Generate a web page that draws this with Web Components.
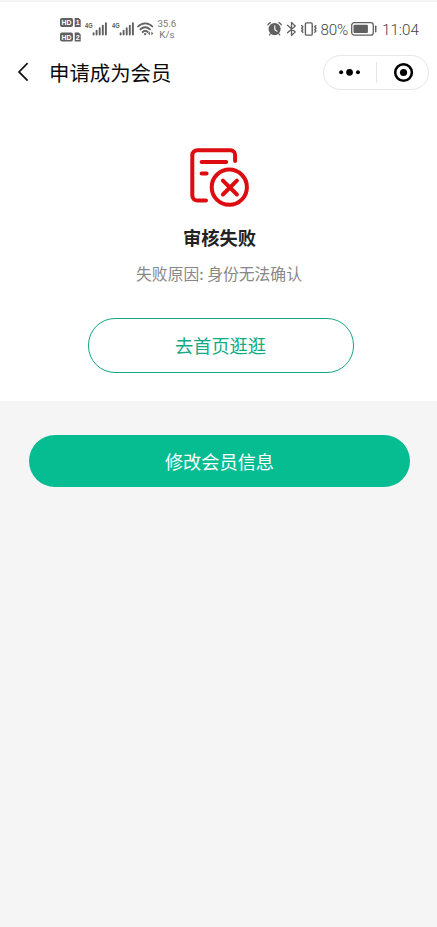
<!DOCTYPE html>
<html lang="zh-CN">
<head>
<meta charset="utf-8">
<meta name="viewport" content="width=device-width, initial-scale=1">
<title>申请成为会员</title>
<style>
html, body { margin: 0; height: 100%; }
body { background: #f5f5f5; font-family: "Noto Sans CJK SC", sans-serif; overflow: hidden; }
</style>
</head>
<body>
<member-page></member-page>
<script>
function define(name, html) {
  const t = document.createElement('template');
  t.innerHTML = html;
  customElements.define(name, class extends HTMLElement {
    constructor() {
      super();
      this.attachShadow({ mode: 'open' }).append(t.content.cloneNode(true));
    }
  });
}

define('sim-badges', `
<style>
:host { display: block; width: 21px; height: 24px; }
svg { display: block; }
text { font: bold 8px "Liberation Sans", sans-serif; fill: #fff; text-anchor: middle; }
</style>
<svg width="21" height="24" viewBox="0 0 21 24">
  <g fill="#606060">
    <rect x="0" y="0" width="13" height="9" rx="2"/><path d="M14.7 0h4l2 2v7h-6z"/>
    <rect x="0" y="14.6" width="13" height="9" rx="2"/><path d="M14.7 14.6h4l2 2v7h-6z"/>
  </g>
  <text x="6.5" y="7.3" textLength="10" lengthAdjust="spacingAndGlyphs">HD</text>
  <text x="17.6" y="7.2" style="font-size:7px">1</text>
  <text x="6.5" y="21.9" textLength="10" lengthAdjust="spacingAndGlyphs">HD</text>
  <text x="17.6" y="21.8" style="font-size:7px">2</text>
</svg>`);

define('cell-signal', `
<style>
:host { display: block; width: 22px; height: 14px; }
svg { display: block; }
text { font: bold 7.5px "Liberation Sans", sans-serif; fill: #555; }
</style>
<svg width="22" height="14" viewBox="0 0 22 14">
  <text x="0" y="6" textLength="7.6" lengthAdjust="spacingAndGlyphs">4G</text>
  <path d="M8.6 12.6v-1.4M11.6 12.6v-3.8M14.7 12.6v-6.4M17.8 12.6v-9M20.9 12.6V1.1" stroke="#606060" stroke-width="1.9" stroke-linecap="round"/>
</svg>`);

define('wifi-icon', `
<style>:host { display: block; width: 17px; height: 14px; } svg { display: block; }</style>
<svg width="17" height="14" viewBox="0 0 17 14" fill="none" stroke="#606060" stroke-width="1.8" stroke-linecap="round">
  <path d="M1 4.5C5 .2 11.5.2 15.3 4.5M3.4 7.4C6.2 4.5 10.1 4.5 12.9 7.4M5.7 10c1.5-1.5 3.5-1.5 5 0"/>
  <circle cx="8.2" cy="12.1" r="1.2" fill="#606060" stroke="none"/>
  <path d="M12.9 9.5L11.1 11.5l1.8 2zM14.4 9.5l1.8 2-1.8 2z" fill="#606060" stroke="none"/>
</svg>`);

define('alarm-icon', `
<style>:host { display: block; width: 16px; height: 16px; } svg { display: block; }</style>
<svg width="16" height="16" viewBox="0 0 16 16" fill="none" stroke="#606060" stroke-linecap="round">
  <circle cx="7.6" cy="8.1" r="6.1" fill="#606060" stroke="none"/>
  <path d="M.9 3.8A7 7 0 0 1 3.3 1.6M11.9 1.6A7 7 0 0 1 14.4 3.8M3.3 12.9l-.8 1M11.9 12.9l.8 1" stroke-width="1.3"/>
  <path d="M7.8 4.9v3.7l2.2 1.6" stroke="#fff" stroke-width="1.1"/>
</svg>`);

define('bluetooth-icon', `
<style>:host { display: block; width: 10px; height: 16px; } svg { display: block; }</style>
<svg width="10" height="16" viewBox="0 0 10 16" fill="none" stroke="#606060" stroke-width="1.3" stroke-linecap="round" stroke-linejoin="round">
  <path d="M.5 4.3l7.8 6.6L4.5 14.5V1.5l3.8 3.4L.5 11.7"/>
</svg>`);

define('vibrate-icon', `
<style>:host { display: block; width: 17px; height: 16px; } svg { display: block; }</style>
<svg width="17" height="16" viewBox="0 0 17 16" fill="none" stroke="#606060" stroke-width="1.4" stroke-linecap="round" stroke-linejoin="round">
  <rect x="4.4" y="1.9" width="6.8" height="12.2" rx="1.2"/>
  <path d="M.6 4.6l1.3 1.2-1.3 1.4 1.3 1.4-1.3 1.3 1.3 1.4M15 4.6l-1.3 1.2 1.3 1.4-1.3 1.4 1.3 1.3-1.3 1.4" stroke-width="1.35"/>
</svg>`);

define('battery-icon', `
<style>:host { display: block; width: 27px; height: 14px; } svg { display: block; }</style>
<svg width="27" height="14" viewBox="0 0 27 14">
  <rect x=".7" y=".7" width="21.6" height="12.4" rx="2.7" fill="none" stroke="#606060" stroke-width="1.3"/>
  <rect x="2.5" y="2.7" width="14.4" height="8.4" rx="1" fill="#606060"/>
  <path d="M24.7 4.2v5.5" stroke="#606060" stroke-width="1.5" stroke-linecap="round"/>
</svg>`);

define('status-bar', `
<style>
:host { display: flex; align-items: flex-start; box-sizing: border-box; height: 48px; padding: 15.5px 18px 0 60px;
  border-top: 2px solid #f4f4f4; color: #606060; font-family: Roboto, sans-serif; }
.left, .right { display: flex; align-items: flex-start; }
.right { margin-left: auto; }
cell-signal { margin: 4px 0 0 4.4px; }
wifi-icon { margin: 4px 0 0 3.6px; }
.speed { margin: 0 0 0 2.5px; width: 20px; font-size: 9.7px; line-height: 11.5px; text-align: center; color: #777; }
alarm-icon { margin-top: 3.5px; }
bluetooth-icon { margin: 3.5px 0 0 4px; }
vibrate-icon { margin: 3.5px 0 0 4px; }
.num { font-size: 15.2px; line-height: 18px; margin-top: 3.5px; white-space: nowrap; font-weight: 300; color: #444; }
.pct { width: 28px; margin-left: 2.5px; letter-spacing: -.2px; }
battery-icon { margin: 4.5px 0 0 2.5px; }
.time { width: 37px; margin-left: 4px; }
</style>
<div class="left">
  <sim-badges></sim-badges><cell-signal></cell-signal><cell-signal></cell-signal><wifi-icon></wifi-icon>
  <div class="speed">35.6<br>K/s</div>
</div>
<div class="right">
  <alarm-icon></alarm-icon><bluetooth-icon></bluetooth-icon><vibrate-icon></vibrate-icon>
  <div class="num pct">80%</div><battery-icon></battery-icon><div class="num time">11:04</div>
</div>`);

define('capsule-menu', `
<style>
:host { display: flex; align-items: center; box-sizing: border-box; width: 106px; height: 35px; border: 1px solid #e6e6e6; border-radius: 18px; background: #fff; }
svg { display: block; flex: 1; height: 33px; }
i { width: 1px; height: 21px; background: #e6e6e6; }
</style>
<svg viewBox="0 0 52 33"><circle cx="17.3" cy="16.3" r="2"/><circle cx="25.8" cy="16.3" r="3.4"/><circle cx="34.3" cy="16.3" r="2"/></svg>
<i></i>
<svg viewBox="0 0 52 33"><circle cx="26.8" cy="16.5" r="8.4" fill="none" stroke="#000" stroke-width="2.6"/><circle cx="26.8" cy="16.5" r="3.6"/></svg>`);

define('nav-bar', `
<style>
:host { display: flex; align-items: center; box-sizing: border-box; height: 48px; padding: 0 8px 0 17px; color: #0c0c0c; }
h1 { margin: 0 auto 0 19px; font-size: 20.4px; line-height: 30px; font-weight: 400; }
svg { display: block; }
</style>
<svg width="13" height="20" viewBox="0 0 13 20" fill="none" stroke="#111" stroke-width="1.7"><path d="M10.6 1.2L2 9.9l8.6 8.7"/></svg>
<h1><slot></slot></h1>
<capsule-menu></capsule-menu>`);

define('rejected-icon', `
<style>:host { display: block; width: 60px; height: 60px; } svg { display: block; }</style>
<svg width="60" height="60" viewBox="0 0 60 60" fill="none" stroke="#dc0c10" stroke-width="4" stroke-linecap="round" stroke-linejoin="round">
  <path d="M16 53.6H7.3a5 5 0 0 1-5-5V8.2a5 5 0 0 1 5-5h33.2a4.6 4.6 0 0 1 4.6 4.6v6.2M11.6 14.9h24.6M11.6 26.5h5"/>
  <circle cx="39.3" cy="40.2" r="17.6"/>
  <path d="M32.9 33.7l14 13.8M46.9 33.7l-14 13.8"/>
</svg>`);

define('pill-button', `
<style>
:host { display: block; }
button { display: block; box-sizing: border-box; width: 100%; height: var(--h); margin: 0; padding: 0 0 1px; border: var(--line, none); border-radius: 27px;
  background: var(--fill, transparent); color: var(--ink); font: 400 18.2px/26px "Noto Sans CJK SC", sans-serif; }
</style>
<button type="button"><slot></slot></button>`);

define('review-result', `
<style>
:host { display: flex; flex-direction: column; align-items: center; box-sizing: border-box; height: 305px; padding: 51px 1px 0 3px; }
h2 { margin: 17px 0 0; font-size: 18.3px; line-height: 26px; color: #222; font-weight: 700; }
p { margin: 13px 1px 0 0; font-size: 15.8px; line-height: 22px; color: #888; white-space: pre; }
pill-button { width: 266px; margin: 33px 0 0 2px; --h: 55px; --line: 1.5px solid #12a585; --ink: #12aa85; }
</style>
<rejected-icon></rejected-icon>
<h2>审核失败</h2>
<p>失败原因: 身份无法确认</p>
<pill-button>去首页逛逛</pill-button>`);

define('member-page', `
<style>
:host { display: block; min-height: 100vh; background: #f5f5f5; }
main { background: #fff; }
footer { padding: 34px 27px 0 29px; --h: 52px; --fill: #06bd92; --ink: #fff; }
</style>
<main>
  <status-bar></status-bar>
  <nav-bar>申请成为会员</nav-bar>
  <review-result></review-result>
</main>
<footer><pill-button>修改会员信息</pill-button></footer>`);
</script>
</body>
</html>
